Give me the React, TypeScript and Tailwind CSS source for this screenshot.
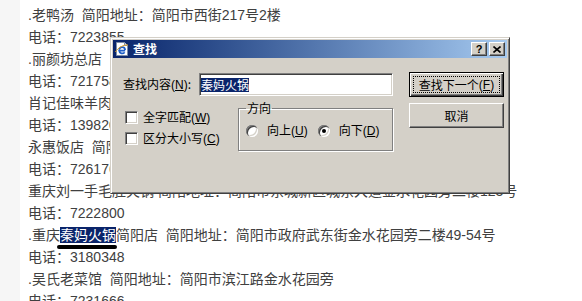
import type { ReactNode } from "react";

const PAGE_FONT = "font-['Liberation_Sans','Noto_Sans_CJK_SC',sans-serif]";

const LINES: Array<ReactNode> = [
  ".老鸭汤\u00a0\u00a0简阳地址：简阳市西街217号2楼",
  "电话：7223855",
  ".丽颜坊总店",
  "电话：7217588",
  "肖记佳味羊肉汤\u00a0\u00a0简阳地址：简阳市东街112号",
  "电话：13982056632",
  "永惠饭店\u00a0\u00a0简阳地址：简阳市人民路45号",
  "电话：7261766",
  "重庆刘一手毛肚火锅\u00a0简阳地址：简阳市东城新区城东大道金水花园旁二楼123号",
  "电话：7222800",
  <>
    .重庆
    <span className="relative inline-block bg-[#0a246a] leading-[16px] text-white">
      秦妈火锅
      <span className="absolute -left-[3px] top-[18px] h-[4px] w-[60px] rounded-full bg-black" />
    </span>
    简阳店{"\u00a0\u00a0"}简阳地址：简阳市政府武东街金水花园旁二楼49-54号
  </>,
  "电话：3180348",
  ".吴氏老菜馆\u00a0\u00a0简阳地址：简阳市滨江路金水花园旁",
  "电话：7231666",
];

function Mnemonic({ k }: { k: string }) {
  return (
    <span className="font-['Liberation_Sans',sans-serif]">
      (<u>{k}</u>)
    </span>
  );
}

function TitleIcon() {
  return (
    <svg aria-hidden="true" className="h-[16px] w-[16px] shrink-0" viewBox="0 0 16 16">
      <path d="M2.5 1.5h8l3 3v10h-11z" fill="#fff" stroke="#7f8fa8" />
      <path d="M10.5 1.5v3h3" fill="#dfe6f0" stroke="#7f8fa8" />
      <path
        d="M11.2 9.6H5.2a3 3 0 0 0 5.4 1.6M5.2 8.4a3 3 0 0 1 5.9 0.6"
        fill="none"
        stroke="#1f5fc8"
        strokeWidth={1.8}
      />
      <path d="M1.5 11c2-4 8-7.5 12.5-7" fill="none" stroke="#e0a020" strokeWidth={1} />
    </svg>
  );
}

function CaptionButton({ children }: { children: ReactNode }) {
  return (
    <div className="flex h-[14px] w-[16px] items-center justify-center border border-t-white border-l-white border-r-[#404040] border-b-[#404040] bg-[#d4d0c8] shadow-[inset_-1px_-1px_0_#808080]">
      {children}
    </div>
  );
}

function Checkbox({ label }: { label: ReactNode }) {
  return (
    <div className="ml-[2px] flex h-[13px] items-center gap-[5px]">
      <span className="h-[13px] w-[13px] border border-t-[#808080] border-l-[#808080] border-r-white border-b-white bg-white shadow-[inset_1px_1px_0_#404040,inset_-1px_-1px_0_#d4d0c8]" />
      <span className="leading-[13px]">{label}</span>
    </div>
  );
}

function Radio({ checked, label }: { checked?: boolean; label: ReactNode }) {
  return (
    <div className="flex items-center gap-[9px]">
      <span className="flex h-[12px] w-[12px] items-center justify-center rounded-full bg-white shadow-[inset_1px_1px_0_#808080,inset_2px_2px_0_#404040,inset_-1px_-1px_0_#fff,inset_-2px_-2px_0_#d4d0c8]">
        {checked && <span className="h-[4px] w-[4px] rounded-full bg-black" />}
      </span>
      <span className="leading-[14px]">{label}</span>
    </div>
  );
}

function FindDialog() {
  return (
    <div className="absolute left-[110px] top-[37px] flex h-[157px] w-[400px] flex-col border border-t-[#d4d0c8] border-l-[#d4d0c8] border-r-[#404040] border-b-[#404040] bg-[#d4d0c8] p-[2px] text-[12px] text-black shadow-[inset_1px_1px_0_#fff,inset_-1px_-1px_0_#808080] font-['Noto_Sans_CJK_SC',sans-serif]">
      <div className="flex h-[18px] shrink-0 items-center bg-linear-to-r from-[#0a246a] to-[#a6caf0] pl-[1px] pr-[2px]">
        <TitleIcon />
        <span className="ml-[3px] font-bold leading-[18px] text-white">查找</span>
        <div className="ml-auto flex gap-[2px]">
          <CaptionButton>
            <span className="text-[11px] font-bold leading-none font-['Liberation_Sans',sans-serif]">?</span>
          </CaptionButton>
          <CaptionButton>
            <svg aria-hidden="true" className="h-[7px] w-[8px]" viewBox="0 0 8 7">
              <path d="M0.5 0.5l7 6M7.5 0.5l-7 6" stroke="#000" strokeWidth={1.6} />
            </svg>
          </CaptionButton>
        </div>
      </div>

      <div className="flex pl-[10px]">
        <div className="flex w-[270px] flex-col">
          <div className="mt-[15px] flex h-[23px] items-center">
            <span className="w-[76px]">
              查找内容<Mnemonic k="N" />:
            </span>
            <div className="flex h-[23px] w-[194px] items-center border border-t-[#808080] border-l-[#808080] border-r-white border-b-white bg-white pl-[1px] shadow-[inset_1px_1px_0_#404040,inset_-1px_-1px_0_#d4d0c8]">
              <span className="bg-[#0a246a] leading-[14px] text-white">秦妈火锅</span>
            </div>
          </div>

          <div className="mt-[5px] flex">
            <div className="flex w-[115px] flex-col gap-[8px] pt-[10px]">
              <Checkbox label={<>全字匹配<Mnemonic k="W" /></>} />
              <Checkbox label={<>区分大小写<Mnemonic k="C" /></>} />
            </div>
            <fieldset className="h-[50px] w-[155px] border border-[#808080] px-[7px] shadow-[inset_1px_1px_0_#fff,1px_1px_0_#fff]">
              <legend className="px-[1px] leading-[14px]">方向</legend>
              <div className="mt-[8px] flex items-center gap-[10px]">
                <Radio label={<>向上<Mnemonic k="U" /></>} />
                <Radio checked label={<>向下<Mnemonic k="D" /></>} />
              </div>
            </fieldset>
          </div>
        </div>

        <div className="ml-[16px] flex flex-col gap-[6px] pt-[14px]">
          <div className="flex h-[25px] w-[95px] border border-black bg-[#d4d0c8] p-[3px] shadow-[inset_1px_1px_0_#fff,inset_-1px_-1px_0_#404040,inset_-2px_-2px_0_#808080]">
            <span className="flex flex-1 items-center justify-center border border-dotted border-black">
              查找下一个<Mnemonic k="F" />
            </span>
          </div>
          <div className="flex h-[25px] w-[95px] items-center justify-center border border-t-white border-l-white border-r-[#404040] border-b-[#404040] bg-[#d4d0c8] shadow-[inset_-1px_-1px_0_#808080]">
            取消
          </div>
        </div>
      </div>
    </div>
  );
}

export default function App() {
  return (
    <div className="relative flex h-[301px] w-[582px] overflow-hidden bg-white">
      <div className="w-[20px] shrink-0 bg-[#f6f6f6]" />
      <div className={`flex flex-col pl-[8px] pt-[4px] text-[14px] leading-[22px] whitespace-nowrap text-[#404040] ${PAGE_FONT}`}>
        {LINES.map((line, i) => (
          <div key={i}>{line}</div>
        ))}
      </div>
      <FindDialog />
    </div>
  );
}
